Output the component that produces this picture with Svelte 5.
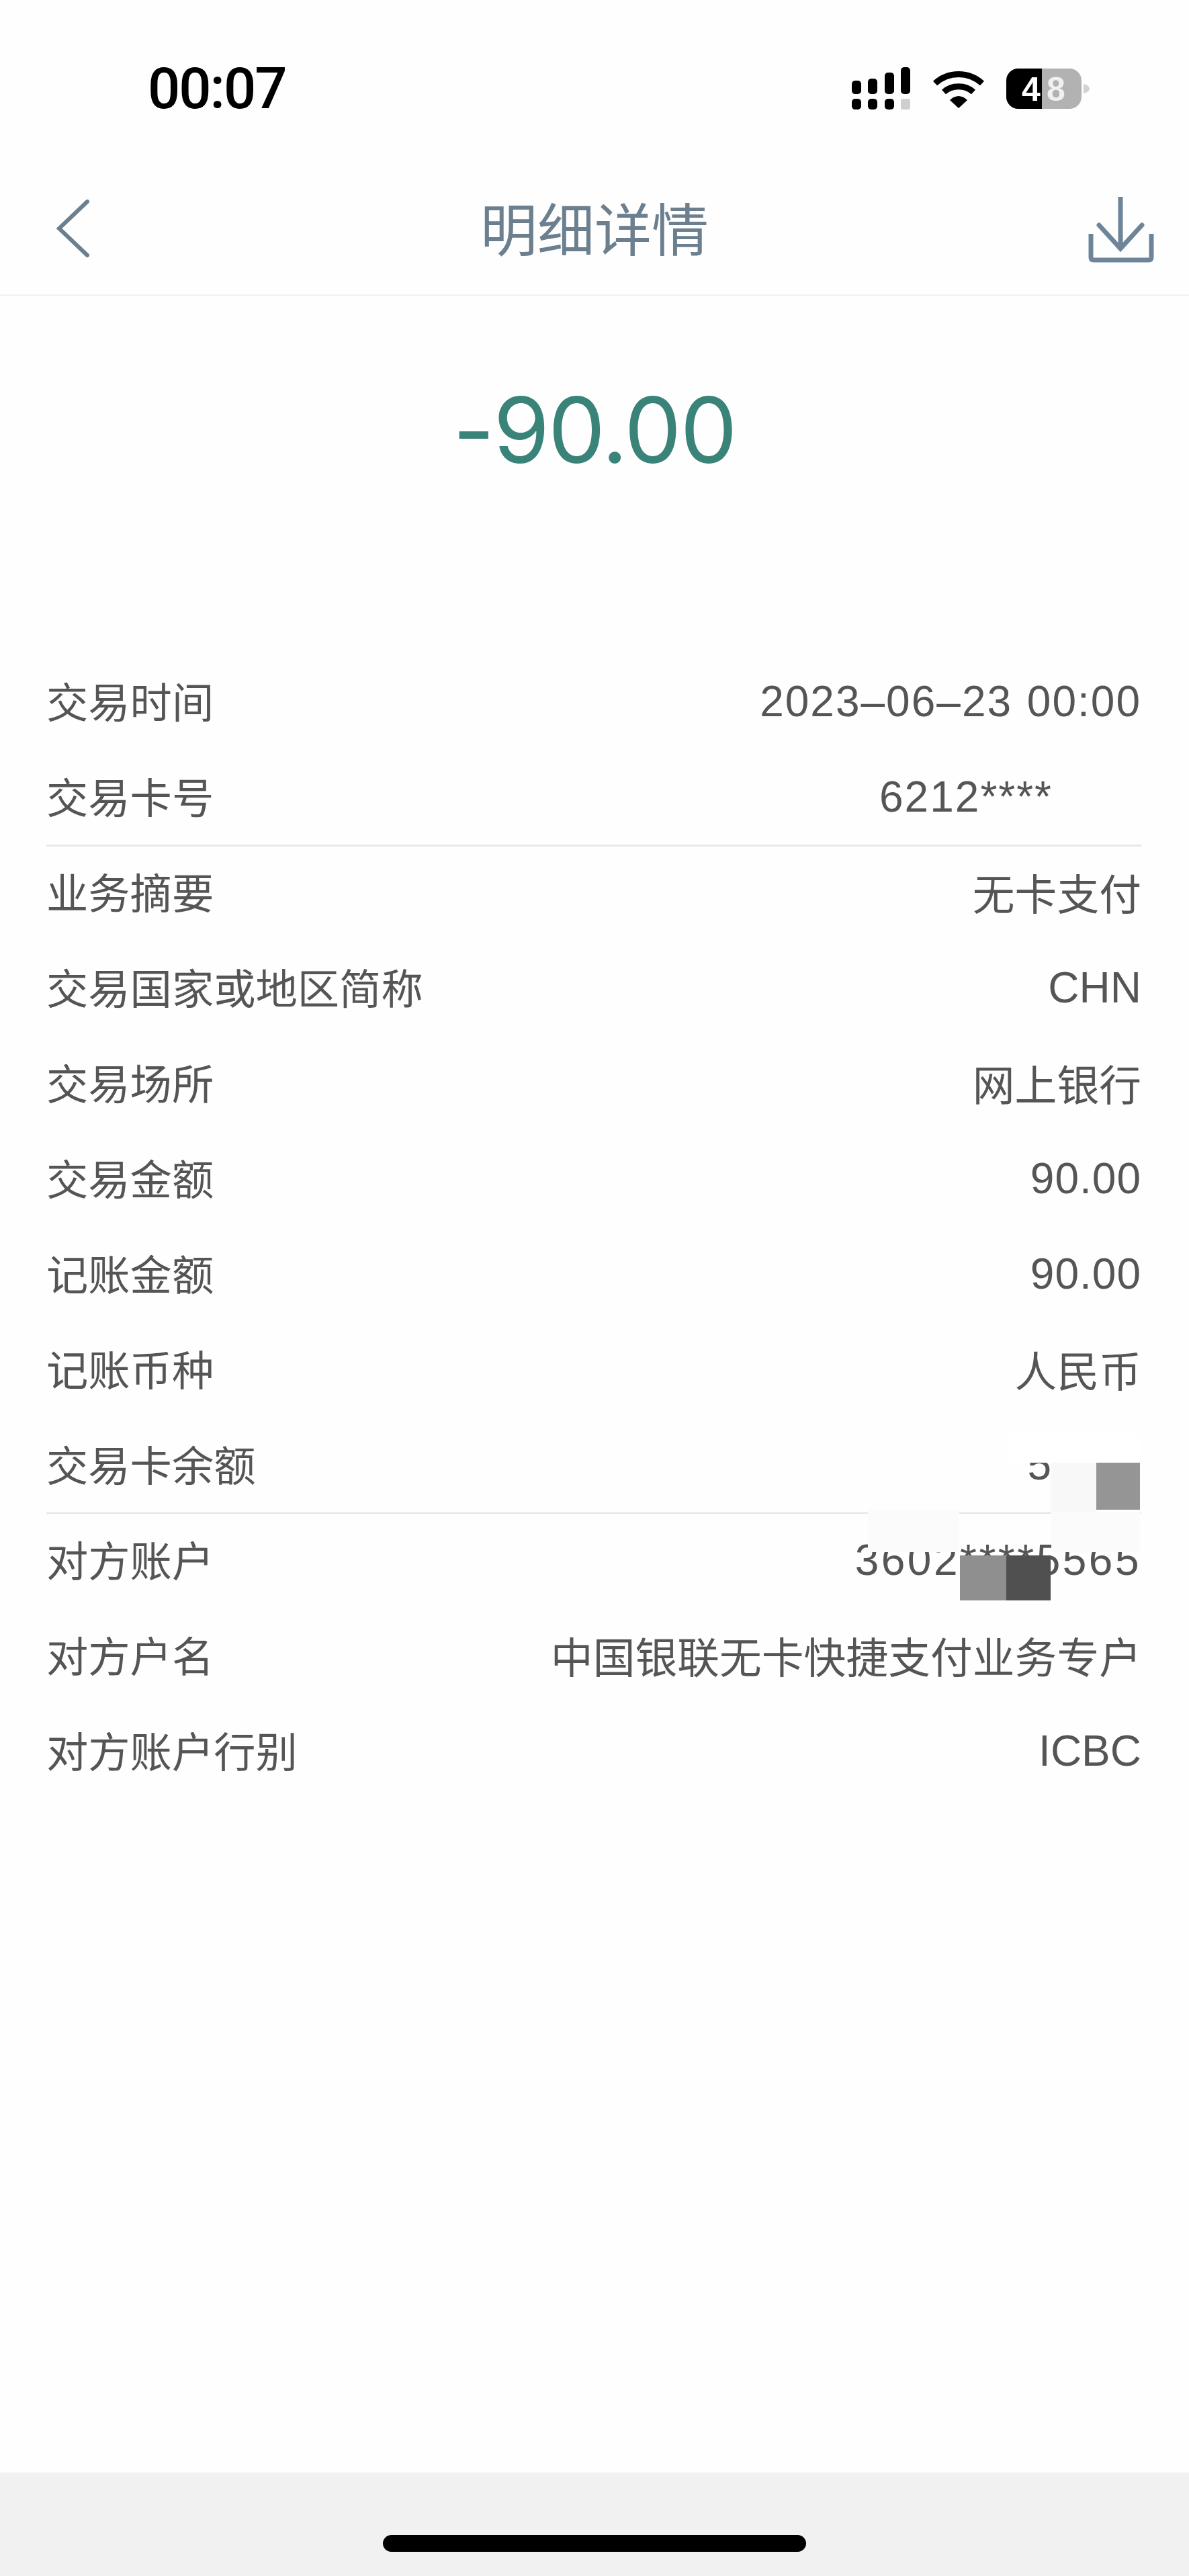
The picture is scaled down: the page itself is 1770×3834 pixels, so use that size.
<script lang="ts">
  // Detail rows, split into the three groups the dividers separate
  const groups = [
    [
      { label: '交易时间', value: '2023–06–23 00:00', kind: 'date' },
      { label: '交易卡号', value: '6212****', kind: 'card' }
    ],
    [
      { label: '业务摘要', value: '无卡支付', kind: 'cjk' },
      { label: '交易国家或地区简称', value: 'CHN' },
      { label: '交易场所', value: '网上银行', kind: 'cjk' },
      { label: '交易金额', value: '90.00', kind: 'money' },
      { label: '记账金额', value: '90.00', kind: 'money' },
      { label: '记账币种', value: '人民币', kind: 'cjk' },
      { label: '交易卡余额', value: '5', kind: 'card' }
    ],
    [
      { label: '对方账户', value: '3602****5565', kind: 'account' },
      { label: '对方户名', value: '中国银联无卡快捷支付业务专户', kind: 'cjk' },
      { label: '对方账户行别', value: 'ICBC' }
    ]
  ];

  // Mosaic tiles laid over the sensitive numbers
  const tiles = [
    { x: 1500, y: 2135, w: 197, h: 42, c: '#ffffff' },
    { x: 1565, y: 2177, w: 67, h: 73, c: '#f8f8f8' },
    { x: 1632, y: 2177, w: 65, h: 70, c: '#959595' },
    { x: 1292, y: 2247, w: 136, h: 63, c: '#fbfbfb' },
    { x: 1565, y: 2250, w: 132, h: 60, c: '#fbfbfb' },
    { x: 1429, y: 2315, w: 69, h: 67, c: '#8f8f8f' },
    { x: 1498, y: 2315, w: 66, h: 67, c: '#505050' }
  ];
</script>

<div class="page">
  <header class="status">
    <span class="time">00:07</span>
    <div class="status-icons">
      <svg class="signal" width="88" height="64" viewBox="0 0 88 64" fill="#000">
        <rect x="0" y="20" width="14" height="20" rx="5" />
        <rect x="24" y="17" width="14" height="23" rx="5" />
        <rect x="49" y="8" width="14" height="32" rx="5" />
        <rect x="73" y="0" width="14" height="40" rx="5" />
        <rect x="0" y="47" width="14" height="16" rx="5" />
        <rect x="24" y="47" width="14" height="16" rx="5" />
        <rect x="49" y="47" width="14" height="16" rx="5" />
        <rect x="73" y="47" width="14" height="16" rx="3" fill="#cfcfcf" />
      </svg>
      <svg class="wifi" width="78" height="58" viewBox="0 0 78 58" fill="none" stroke="#000" stroke-width="9">
        <path d="M4 21 C24 3 54 3 74 21" />
        <path d="M17 34 C29 23 49 23 61 34" />
        <path d="M26 46 L39 58 L52 46 C44 38 34 38 26 46 Z" fill="#000" stroke="none" />
      </svg>
      <svg class="battery" width="124" height="60" viewBox="0 0 124 60">
        <rect x="0" y="0" width="112" height="60" rx="18" fill="#b2b2b2" />
        <path d="M18 0 H53 V60 H18 A18 18 0 0 1 0 42 V18 A18 18 0 0 1 18 0 Z" fill="#000" />
        <path d="M115 23 C120 24 124 27 124 30 C124 33 120 36 115 37 Z" fill="#d2d2d2" />
        <text class="batt-num" x="37" y="48">4</text>
        <text class="batt-num light" x="74" y="48">8</text>
      </svg>
    </div>
  </header>

  <nav class="nav">
    <svg class="back" width="52" height="86" viewBox="0 0 52 86" fill="none" stroke="#6b7f8e" stroke-width="6" stroke-linecap="round">
      <path d="M47 3 L5 43 L47 83" />
    </svg>
    <h1>明细详情</h1>
    <svg class="download" width="100" height="100" viewBox="0 0 100 100" fill="none" stroke="#6d8499" stroke-width="7">
      <path d="M49 2 V78" />
      <path d="M17 44 L49 79 L81 44" stroke-linecap="round" />
      <path d="M5 57 V92 Q5 96 9 96 H91 Q95 96 95 92 V57" />
    </svg>
  </nav>

  <section class="amount">-90.00</section>

  <main class="details">
    {#each groups as group}
      <div class="group">
        {#each group as row}
          <div class="row">
            <span class="label">{row.label}</span>
            <span class="value {row.kind ?? ''}">{row.value}</span>
          </div>
        {/each}
      </div>
    {/each}
  </main>

  <footer class="home">
    <div class="home-bar"></div>
  </footer>

  {#each tiles as t}
    <div class="tile" style="left:{t.x}px;top:{t.y}px;width:{t.w}px;height:{t.h}px;background:{t.c}"></div>
  {/each}
</div>

<style>
  :global(body) {
    margin: 0;
    background: #fff;
  }

  .page {
    position: relative;
    display: flex;
    flex-direction: column;
    width: 1770px;
    height: 3834px;
    overflow: hidden;
    background: #fefefe;
    font-family: "Liberation Sans", "Noto Sans CJK SC", sans-serif;
  }

  /* Status bar */
  .status {
    display: flex;
    justify-content: space-between;
    align-items: flex-start;
    box-sizing: border-box;
    height: 234px;
    padding: 100px 148px 0 220px;
  }

  .time {
    font-family: Roboto, sans-serif;
    font-size: 85px;
    font-weight: 500;
    line-height: 64px;
    letter-spacing: -2px;
    color: #000;
  }

  .status-icons {
    display: flex;
    gap: 32px;
    align-items: flex-start;
  }

  .wifi { margin-top: 3px; }
  .battery { margin-top: 2px; }

  .batt-num {
    font-family: "Liberation Sans", sans-serif;
    font-size: 50px;
    font-weight: 700;
    fill: #fff;
    text-anchor: middle;
  }

  .batt-num.light { fill: #f0f0f0; }

  /* Navigation */
  .nav {
    display: grid;
    grid-template-columns: 1fr auto 1fr;
    align-items: center;
    box-sizing: border-box;
    height: 207px;
    padding: 0 51px;
    border-bottom: 3px solid #f3f3f3;
  }

  .back {
    margin: 8px 0 0 32px;
  }

  .nav h1 {
    margin: 0;
    font-size: 85px;
    font-weight: 400;
    color: #6b7f8e;
  }

  .download {
    justify-self: end;
    margin-top: 10px;
  }

  /* Amount */
  .amount {
    box-sizing: border-box;
    height: 532px;
    padding-top: 129px;
    font-family: Inter, sans-serif;
    font-size: 135px;
    line-height: 140px;
    letter-spacing: -2px;
    text-align: center;
    color: #3a8379;
  }

  /* Detail list */
  .details {
    flex: 1;
    padding: 0 71px 0 69px;
  }

  .group:not(:last-child) { box-shadow: 0 2px 0 #e4e4e4; }
  .group:first-child { box-shadow: 0 3px 0 #e8e8e8; }

  .row {
    display: flex;
    justify-content: space-between;
    align-items: center;
    height: 142px;
    font-size: 62.3px;
    color: #555;
  }

  .label,
  .value.cjk { padding-bottom: 4px; }

  .value { font-size: 64px; }
  .value.cjk { font-size: 62.8px; }
  .value.money { letter-spacing: 1px; }
  .value.date { word-spacing: 2px; letter-spacing: 2px; }
  .value.card { letter-spacing: 2px; padding-right: 132px; }
  .value.account { letter-spacing: 3.5px; }

  /* Home indicator */
  .home {
    display: flex;
    justify-content: center;
    box-sizing: border-box;
    height: 154px;
    padding-top: 93px;
    background: #f1f1f1;
  }

  .home-bar {
    width: 630px;
    height: 25px;
    border-radius: 13px;
    background: #000;
  }

  .tile { position: absolute; }
</style>
